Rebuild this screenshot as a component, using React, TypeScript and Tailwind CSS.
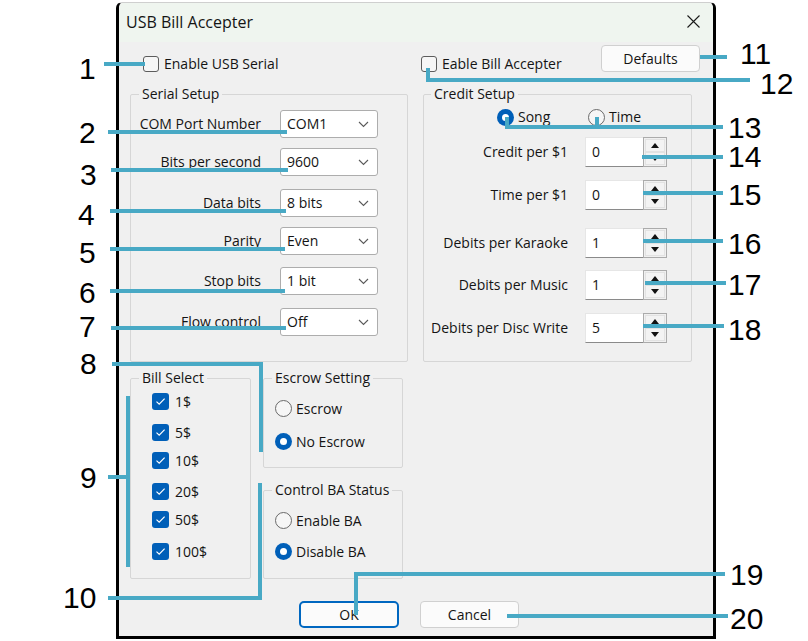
import React from "react";

function Chevron() {
  return (
    <svg width="11" height="7" viewBox="0 0 11 7">
      <path d="M1 1 L5.5 5.5 L10 1" fill="none" stroke="#5a5a5a" strokeWidth="1.1" />
    </svg>
  );
}

function Combo({ value }: { value: string }) {
  return (
    <div className="ml-[19px] flex items-center justify-between w-[98px] h-[28px] bg-white border border-[#adadad] rounded-[3px] pl-[6px] pr-[8px]">
      <span>{value}</span>
      <Chevron />
    </div>
  );
}

function SerialRow({ label, value, mt }: { label: string; value: string; mt: string }) {
  return (
    <div className={`flex items-center ${mt}`}>
      <div className="w-[130px] text-right">{label}</div>
      <Combo value={value} />
    </div>
  );
}

function Spin({ label, value, mt }: { label: string; value: string; mt: string }) {
  return (
    <div className={`flex items-center ${mt}`}>
      <div className="w-[144px] text-right">{label}</div>
      <div className="ml-[17px] w-[58px] h-[30px] bg-white border-b border-b-[#8a8a8a] border-t border-t-[#e6e6e6] border-l border-l-[#e6e6e6] pl-[6px] flex items-center">
        {value}
      </div>
      <div className="w-[24px] h-[30px] border border-[#ababab] bg-[#f0f0f0] flex flex-col p-[1px]">
        <div className="flex-1 flex items-center justify-center border border-[#e2e2e2] bg-[#f3f3f3]">
          <svg width="8" height="5" viewBox="0 0 8 5">
            <path d="M0 5 L4 0 L8 5 Z" fill="#111" />
          </svg>
        </div>
        <div className="flex-1 flex items-center justify-center border border-[#e2e2e2] bg-[#f3f3f3]">
          <svg width="8" height="5" viewBox="0 0 8 5">
            <path d="M0 0 L8 0 L4 5 Z" fill="#111" />
          </svg>
        </div>
      </div>
    </div>
  );
}

function CheckBox({ checked }: { checked: boolean }) {
  if (checked) {
    return (
      <div className="w-[17px] h-[17px] rounded-[3px] bg-[#005fb8] flex items-center justify-center shrink-0">
        <svg width="11" height="9" viewBox="0 0 11 9">
          <path d="M1.5 4.6 L4.2 7.2 L9.6 1.6" fill="none" stroke="white" strokeWidth="1.2" />
        </svg>
      </div>
    );
  }
  return <div className="w-[16px] h-[16px] rounded-[3px] border border-[#5c5c5c] bg-[#f6f6f6] shrink-0" />;
}

function Radio({ checked }: { checked: boolean }) {
  if (checked) {
    return (
      <div className="w-[17px] h-[17px] rounded-full bg-[#005fb8] flex items-center justify-center shrink-0">
        <div className="w-[7px] h-[7px] rounded-full bg-white" />
      </div>
    );
  }
  return <div className="w-[17px] h-[17px] rounded-full border border-[#6a6a6a] bg-[#f6f6f6] shrink-0" />;
}

function Bill({ label, mt }: { label: string; mt: string }) {
  return (
    <div className={`flex items-center h-[17px] ml-[21px] gap-[6px] ${mt}`}>
      <CheckBox checked />
      <span>{label}</span>
    </div>
  );
}

function RadioItem({ label, checked, mt }: { label: string; checked: boolean; mt: string }) {
  return (
    <div className={`flex items-center h-[17px] ml-[11px] gap-[4px] ${mt}`}>
      <Radio checked={checked} />
      <span>{label}</span>
    </div>
  );
}

const lines: [number, number, number, number][] = [
  [104, 64, 145, 64],
  [108, 132, 287, 132],
  [111, 170, 288, 170],
  [110, 211, 286, 211],
  [110, 249, 285, 249],
  [110, 291, 285, 291],
  [111, 328, 286, 328],
  [112, 364, 263, 364],
  [261, 362, 261, 452],
  [128, 396, 128, 567],
  [108, 477, 130, 477],
  [108, 598, 262, 598],
  [260, 483, 260, 600],
  [700, 57, 727, 57],
  [427, 80, 750, 80],
  [428, 68, 428, 82],
  [505, 127, 723, 127],
  [507, 117, 507, 129],
  [597, 117, 597, 129],
  [642, 157, 723, 157],
  [643, 193, 723, 193],
  [643, 241, 723, 241],
  [645, 283, 726, 283],
  [643, 326, 724, 326],
  [356, 574, 725, 574],
  [356, 572, 356, 615],
  [507, 616, 728, 616],
];

export default function App() {
  return (
    <div className="relative w-[808px] h-[641px] bg-white overflow-hidden font-['Open_Sans',sans-serif] text-[14px] leading-[18px] text-[#141414]">
      <div className="ml-[116px] pt-[2px]">
        <div className="w-[600px] h-[637px] border-x-[3px] border-b-[3px] border-t border-t-[#cfcfcf] border-x-black border-b-black rounded-t-[6px] bg-[#f0f0f0] flex flex-col">
          {/* title bar */}
          <div className="h-[39px] bg-[#eff5ef] flex items-center justify-between pl-[7px] pr-[13px] pb-[2px] rounded-t-[5px]">
            <span className="text-[16px] leading-[20px]">USB Bill Accepter</span>
            <svg width="13" height="13" viewBox="0 0 13 13">
              <path d="M0.5 0.5 L12.5 12.5 M12.5 0.5 L0.5 12.5" stroke="#1a1a1a" strokeWidth="1.1" />
            </svg>
          </div>

          {/* row 1 */}
          <div className="flex h-[30px] mt-[3px]">
            <div className="ml-[24px] w-[278px] flex items-center gap-[5px] mt-[10px] self-start">
              <CheckBox checked={false} />
              <span>Enable USB Serial</span>
            </div>
            <div className="w-[180px] flex items-center gap-[5px] mt-[10px] self-start">
              <CheckBox checked={false} />
              <span>Eable Bill Accepter</span>
            </div>
            <button className="w-[99px] h-[27px] bg-[#fbfbfb] border border-[#d0d0d0] rounded-[4px] flex items-center justify-center">
              Defaults
            </button>
          </div>

          {/* groups row */}
          <div className="flex mt-[10px]">
            <fieldset className="ml-[11px] w-[278px] h-[277px] border border-[#d6d6d6] rounded-[2px]">
              <legend className="ml-[8px] px-[3px]">Serial Setup</legend>
              <SerialRow label="COM Port Number" value="COM1" mt="mt-[7px]" />
              <SerialRow label="Bits per second" value="9600" mt="mt-[10px]" />
              <SerialRow label="Data bits" value="8 bits" mt="mt-[13px]" />
              <SerialRow label="Parity" value="Even" mt="mt-[10px]" />
              <SerialRow label="Stop bits" value="1 bit" mt="mt-[12px]" />
              <SerialRow label="Flow control" value="Off" mt="mt-[13px]" />
            </fieldset>
            <fieldset className="ml-[15px] w-[269px] h-[277px] border border-[#d6d6d6] rounded-[2px]">
              <legend className="ml-[7px] px-[3px]">Credit Setup</legend>
              <div className="flex items-center mt-[5px] ml-[73px]">
                <div className="w-[91px] flex items-center gap-[4px]">
                  <Radio checked />
                  <span>Song</span>
                </div>
                <div className="flex items-center gap-[4px]">
                  <Radio checked={false} />
                  <span>Time</span>
                </div>
              </div>
              <Spin label="Credit per $1" value="0" mt="mt-[11px]" />
              <Spin label="Time per $1" value="0" mt="mt-[13px]" />
              <Spin label="Debits per Karaoke" value="1" mt="mt-[18px]" />
              <Spin label="Debits per Music" value="1" mt="mt-[12px]" />
              <Spin label="Debits per Disc Write" value="5" mt="mt-[13px]" />
            </fieldset>
          </div>

          {/* bills row */}
          <div className="flex mt-[7px]">
            <fieldset className="ml-[11px] w-[121px] h-[210px] border border-[#d6d6d6] rounded-[2px]">
              <legend className="ml-[8px] px-[3px]">Bill Select</legend>
              <Bill label="1$" mt="mt-[6px]" />
              <Bill label="5$" mt="mt-[14px]" />
              <Bill label="10$" mt="mt-[11px]" />
              <Bill label="20$" mt="mt-[14px]" />
              <Bill label="50$" mt="mt-[11px]" />
              <Bill label="100$" mt="mt-[15px]" />
            </fieldset>
            <div className="ml-[12px] w-[140px] flex flex-col">
              <fieldset className="h-[99px] border border-[#d6d6d6] rounded-[2px]">
                <legend className="ml-[8px] px-[3px]">Escrow Setting</legend>
                <RadioItem label="Escrow" checked={false} mt="mt-[13px]" />
                <RadioItem label="No Escrow" checked mt="mt-[16px]" />
              </fieldset>
              <fieldset className="mt-[13px] h-[98px] border border-[#d6d6d6] rounded-[2px]">
                <legend className="ml-[8px] px-[3px]">Control BA Status</legend>
                <RadioItem label="Enable BA" checked={false} mt="mt-[13px]" />
                <RadioItem label="Disable BA" checked mt="mt-[14px]" />
              </fieldset>
            </div>
          </div>

          {/* buttons */}
          <div className="flex mt-[22px]">
            <button className="ml-[180px] w-[100px] h-[27px] bg-[#fbfbfb] border-2 border-[#0067c0] rounded-[5px] flex items-center justify-center">
              OK
            </button>
            <button className="ml-[21px] w-[99px] h-[27px] bg-[#fbfbfb] border border-[#d0d0d0] rounded-[4px] flex items-center justify-center">
              Cancel
            </button>
          </div>
        </div>
      </div>

      {/* callout lines */}
      <svg className="absolute inset-0 pointer-events-none" width="808" height="641">
        {lines.map(([x1, y1, x2, y2], i) => (
          <line key={i} x1={x1} y1={y1} x2={x2} y2={y2} stroke="#48a9c5" strokeWidth="4" />
        ))}
      </svg>

      {/* callout numbers */}
      <div className="font-['Liberation_Sans',Arial,sans-serif] text-[30px] leading-[24px] text-black">
        <span className="absolute left-[79px] top-[57px]">1</span>
        <span className="absolute left-[79px] top-[121px]">2</span>
        <span className="absolute left-[80px] top-[163px]">3</span>
        <span className="absolute left-[78px] top-[203px]">4</span>
        <span className="absolute left-[79px] top-[241px]">5</span>
        <span className="absolute left-[79px] top-[281px]">6</span>
        <span className="absolute left-[79px] top-[315px]">7</span>
        <span className="absolute left-[80px] top-[352px]">8</span>
        <span className="absolute left-[80px] top-[466px]">9</span>
        <span className="absolute left-[63px] top-[586px]">10</span>
        <span className="absolute left-[740px] top-[42px]">11</span>
        <span className="absolute left-[760px] top-[72px]">12</span>
        <span className="absolute left-[728px] top-[116px]">13</span>
        <span className="absolute left-[728px] top-[145px]">14</span>
        <span className="absolute left-[728px] top-[183px]">15</span>
        <span className="absolute left-[728px] top-[232px]">16</span>
        <span className="absolute left-[728px] top-[273px]">17</span>
        <span className="absolute left-[728px] top-[318px]">18</span>
        <span className="absolute left-[730px] top-[563px]">19</span>
        <span className="absolute left-[730px] top-[607px]">20</span>
      </div>
    </div>
  );
}
